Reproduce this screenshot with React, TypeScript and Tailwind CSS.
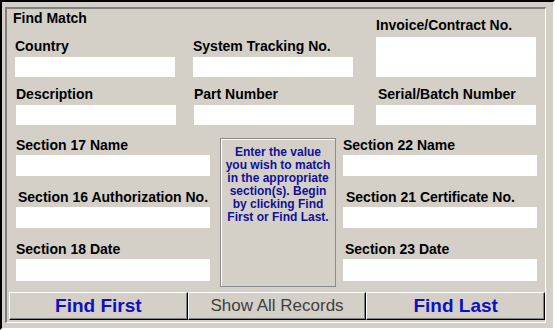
import React from "react";

const font = { fontFamily: '"Liberation Sans", Arial, sans-serif' };

function Field({ label, h = "h-[20px]", w, indent = "" }: { label: string; h?: string; w: string; indent?: string }) {
  return (
    <div className={`flex flex-col ${w}`}>
      <span className={`text-[14px] leading-[16px] font-bold text-black whitespace-nowrap ${indent}`}>{label}</span>
      <div className={`mt-[3px] bg-white ${h}`} />
    </div>
  );
}

function SideField({ label, h = "h-[21px]", indent = "" }: { label: string; h?: string; indent?: string }) {
  return (
    <div className="flex flex-col w-[194px]">
      <span className={`text-[14px] leading-[16px] font-bold text-black whitespace-nowrap ${indent}`}>{label}</span>
      <div className={`mt-[2px] bg-white ${h}`} />
    </div>
  );
}

function Btn({ children, className }: { children: React.ReactNode; className: string }) {
  return (
    <button
      className={`flex-1 h-[28px] flex items-center justify-center bg-[#d4d0c8] border-t border-l border-t-white border-l-white border-r border-b border-r-black border-b-black shadow-[inset_-1px_-1px_0_#808080] ${className}`}
    >
      {children}
    </button>
  );
}

export default function App() {
  return (
    <div style={font} className="w-[555px] h-[330px] bg-[#d4d0c8] border-2 border-t-black border-l-black border-r-white border-b-white pt-[5px] pl-[3px] pr-[7px] pb-[5px]">
      <div className="h-full border-t-2 border-l-2 border-t-[#808080] border-l-[#808080] border-r border-b border-r-white border-b-white flex flex-col">

        {/* top row */}
        <div className="flex items-end pt-[1px] pl-[8px]">
          <div className="flex flex-col w-[160px]">
            <span className="text-[14px] leading-[16px] font-bold text-black -ml-[2px]">Find Match</span>
            <div className="mt-[12px]">
              <Field label="Country" w="w-[160px]" />
            </div>
          </div>
          <div className="ml-[18px]">
            <Field label="System Tracking No." w="w-[160px]" />
          </div>
          <div className="ml-[23px]">
            <Field label="Invoice/Contract No." h="h-[40px]" w="w-[160px]" indent="mb-[1px]" />
          </div>
        </div>

        <div className="flex mt-[9px] pl-[9px]">
          <Field label="Description" w="w-[160px]" />
          <div className="ml-[18px]">
            <Field label="Part Number" w="w-[160px]" />
          </div>
          <div className="ml-[22px]">
            <Field label="Serial/Batch Number" w="w-[160px]" indent="pl-[2px]" />
          </div>
        </div>

        {/* section rows */}
        <div className="flex items-start mt-[12px] pl-[9px]">
          <div className="flex flex-col gap-[13px]">
            <SideField label="Section 17 Name" />
            <SideField label="Section 16 Authorization No." indent="pl-[2px]" />
            <SideField label="Section 18 Date" h="h-[22px]" />
          </div>
          <div className="ml-[10px] mt-[1px] w-[116px] h-[149px] border border-[#8c8c8c] shadow-[inset_1px_1px_0_#fff] pt-[7px] px-[3px] text-center text-[12px] leading-[13px] font-bold text-[#10109c]">
            Enter the value you wish to match in the appropriate section(s). Begin by clicking Find First or Find Last.
          </div>
          <div className="ml-[7px] flex flex-col gap-[13px]">
            <SideField label="Section 22 Name" />
            <SideField label="Section 21 Certificate No." indent="pl-[3px]" />
            <SideField label="Section 23 Date" h="h-[22px]" indent="pl-[2px]" />
          </div>
        </div>

        {/* buttons */}
        <div className="flex mt-[5px] ml-[2px]">
          <Btn className="text-[19px] font-bold text-[#1010c0]">Find First</Btn>
          <Btn className="text-[17px] text-[#404040]">Show All Records</Btn>
          <Btn className="text-[19px] font-bold text-[#1010c0]">Find Last</Btn>
        </div>
      </div>
    </div>
  );
}
